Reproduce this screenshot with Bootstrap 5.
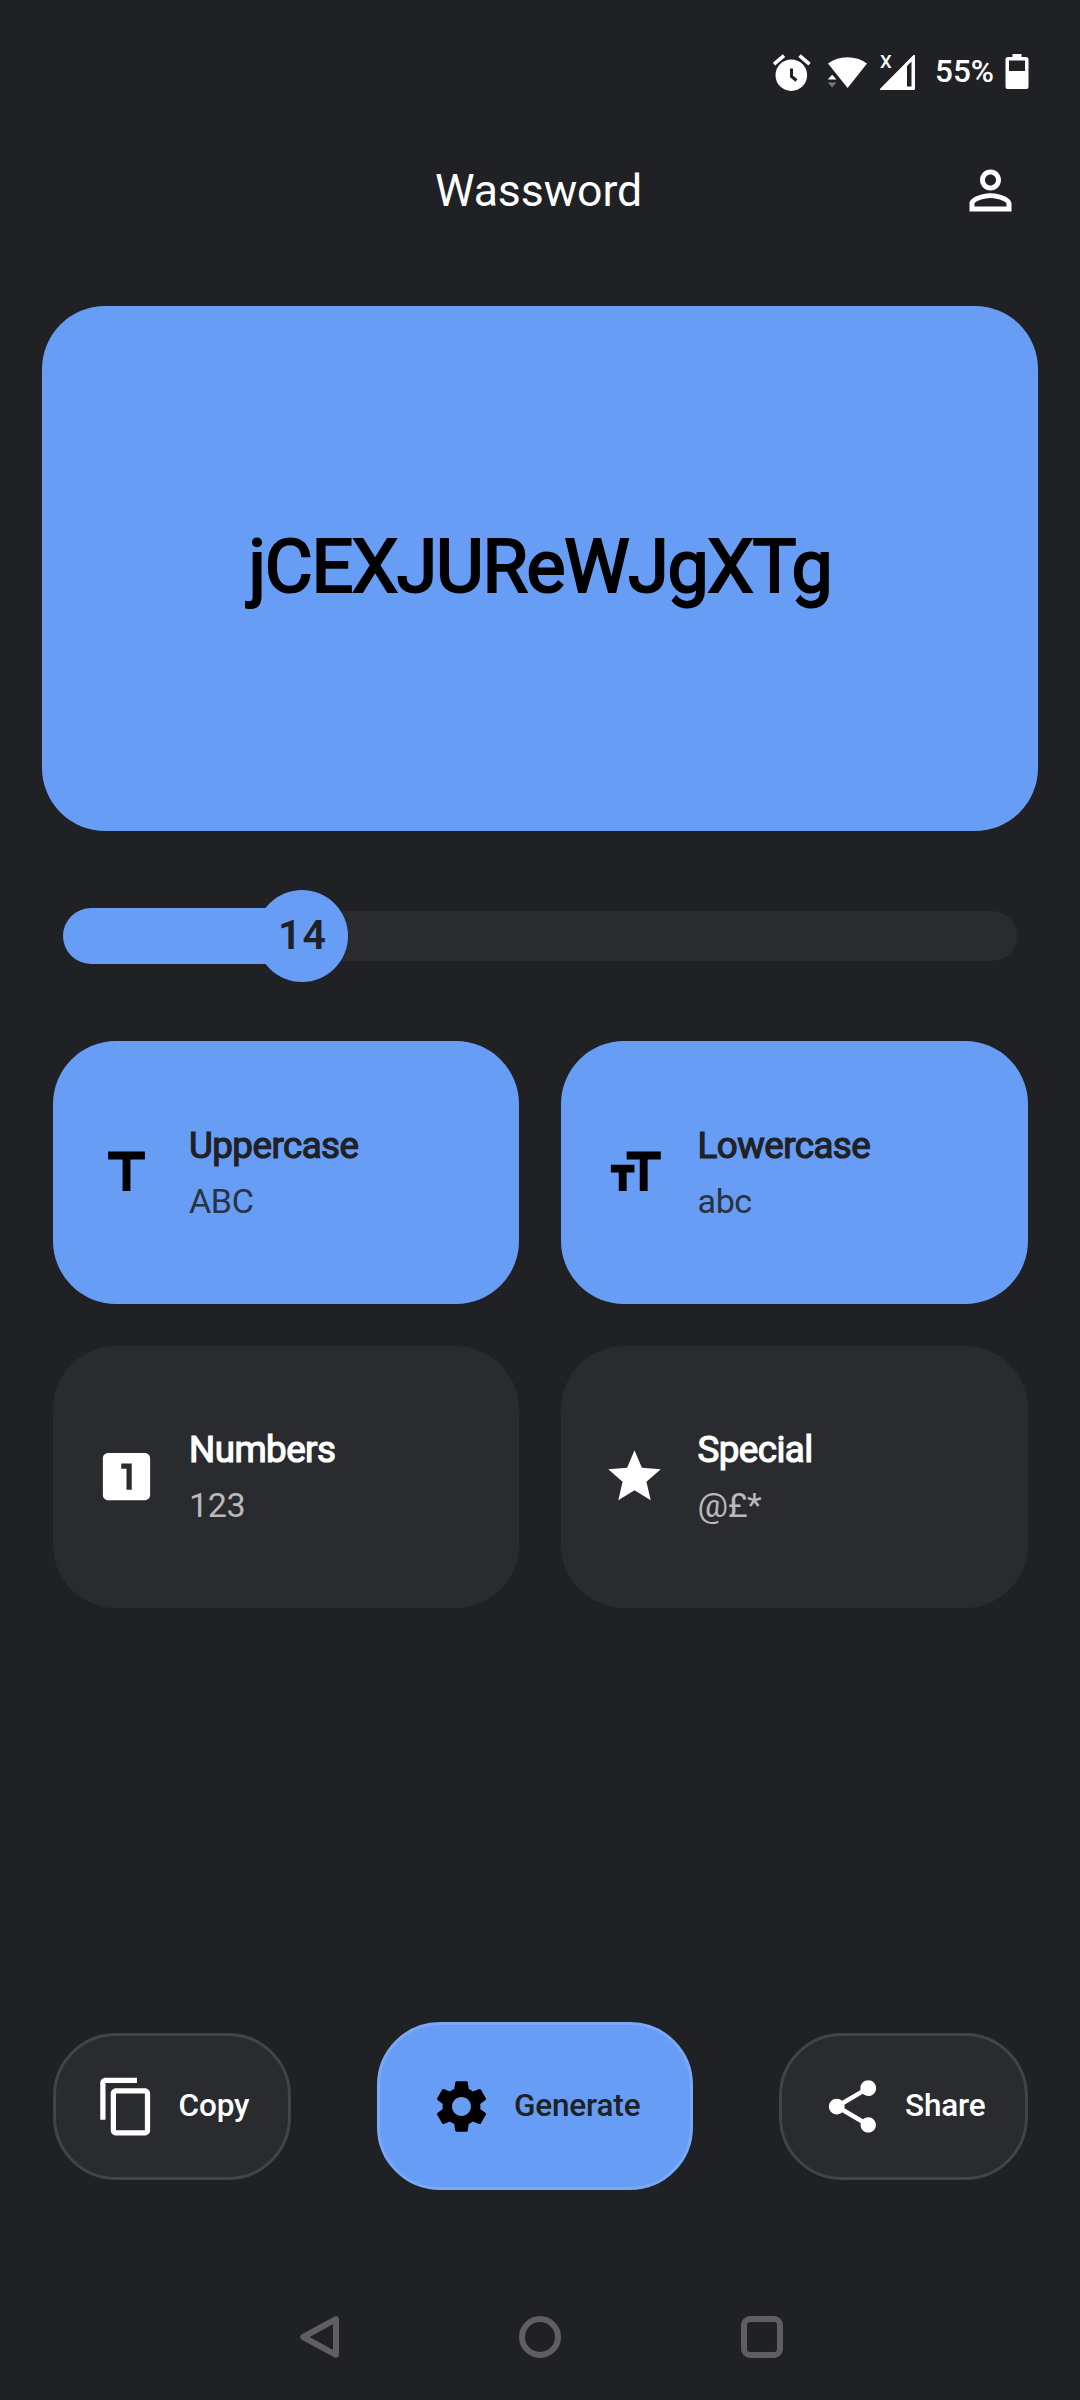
<!DOCTYPE html>
<html lang="en" data-bs-theme="dark">
<head>
<meta charset="utf-8">
<meta name="viewport" content="width=device-width, initial-scale=1">
<title>Wassword</title>
<link href="https://cdn.jsdelivr.net/npm/bootstrap@5.3.0/dist/css/bootstrap.min.css" rel="stylesheet">
<style>
  :root { --app-bg:#202124; --surface:#2a2b2f; --accent:#679df5; --outline:#434447; }
  body { background:var(--app-bg); font-family:Roboto,"Noto Sans",sans-serif; color:#fff; }
  .screen { width:1080px; height:2400px; }
  .statusbar { height:144px; padding-right:51px; }
  .statusbar svg { overflow:visible; }
  .battery-label { font-size:31.5px; font-weight:500; line-height:36px; margin:-1px 11px 0 19.5px; }
  .topbar { height:92px; padding-right:58.5px; }
  .app-title { font-size:44.6px; line-height:52px; font-weight:400; letter-spacing:-.1px; padding:2px 3px 0 0; }
  .ico { width:63px; height:63px; fill:currentColor; flex:none; display:block; }
  .password-card { height:525px; margin:70px 42px 0; border-radius:63px; background:var(--accent); color:#000; }
  .password-text { font-size:73.5px; line-height:86px; letter-spacing:-1.25px; padding-bottom:3px; -webkit-text-stroke:2.2px #000; }
  .length-slider { height:210px; padding:0 63px; }
  .slider-track { height:50px; border-radius:25px; background:var(--surface); }
  .slider-fill { height:56px; border-radius:28px 0 0 28px; background:var(--accent); }
  .slider-knob { width:92px; height:92px; background:var(--accent); color:var(--app-bg); font-size:41px; font-weight:600; letter-spacing:1px; padding-left:2px; }
  .options { padding:0 52.5px; display:grid; grid-template-columns:1fr 1fr; gap:42px; }
  .option { height:262.5px; border-radius:63px; padding-left:42px; gap:31.5px; background:var(--surface); color:#fff; }
  .option.on { background:var(--accent); color:#000; }
  .option-name { font-size:36.75px; line-height:54px; letter-spacing:-.55px; color:#fff; -webkit-text-stroke:1.2px currentColor; padding-top:3px; }
  .option-hint { font-size:34.1px; line-height:56px; letter-spacing:-.4px; color:#b9b9bb; }
  .on .option-name { color:#202124; }
  .on .option-hint { color:#2a3340; }
  .actions { height:168px; margin:auto 52.5px 210px; }
  .action { height:147px; border-radius:63px; border:3px solid var(--outline); background:var(--surface); color:#fff; font-size:31.5px; font-weight:500; letter-spacing:-.15px; padding:0 39px; gap:21px; }
  .action.main { height:168px; border-color:#7aa9f5; background:var(--accent); color:#202124; padding:0 50px; }
  .action.main .ico { color:#000; }
  .navkeys { height:126px; margin-top:-126px; padding:0 294px; }
  .navkeys svg { width:48px; height:48px; fill:none; stroke:#5f5f61; stroke-width:6; stroke-linejoin:round; }
</style>
</head>
<body>
<div class="screen d-flex flex-column overflow-hidden">
  <div class="statusbar d-flex align-items-center justify-content-end">
    <svg width="144" height="40" viewBox="772 52 144 40" fill="#fff">
      <circle cx="792.3" cy="75.2" r="15.8"/>
      <path d="M775 64.200l10-8.600M800.500 55.600l10 8.600" stroke="#fff" stroke-width="3.600"/>
      <path d="M792.500 68.500v8l5 4" fill="none" stroke="#202124" stroke-width="3"/>
      <path d="M829 63.600a33 33 0 0 1 39 0L848.600 88z"/>
      <path d="M828.800 79.500h8.600l-4.300-4.800z"/>
      <path d="M828.800 82.600h8.600l-4.300 4.800z" fill="#77787a"/>
      <path fill-rule="evenodd" d="M916 56v32.500q0 1.500-1.500 1.500H882q-2 0-.6-1.500L914 55.500q2-1.500 2 .5zM912.500 61.500L908 66V86.500h4.500z"/>
      <text x="881" y="68" font-family="Roboto" font-size="18.500" font-weight="500">X</text>
    </svg>
    <span class="battery-label">55%</span>
    <svg width="24" height="36" viewBox="0 0 24 36"><path fill="#fff" fill-rule="evenodd" d="M7.500 0h9v3H21q2.500 0 2.500 2.500V33q0 2-2 2h-19Q.5 35 .5 33V5.500Q.5 3 3 3h4.500zM4 6.500V17h16V6.500z"/></svg>
  </div>
  <header class="topbar d-flex align-items-center position-relative justify-content-end">
    <h1 class="app-title m-0 position-absolute start-50 translate-middle-x">Wassword</h1>
    <svg class="ico" viewBox="0 0 24 24"><path d="M12 5.900c1.160 0 2.100.940 2.100 2.100s-.940 2.100-2.100 2.100S9.900 9.160 9.900 8s.940-2.100 2.100-2.100m0 9c2.970 0 6.100 1.460 6.100 2.100v1.100H5.900V17c0-.640 3.130-2.100 6.100-2.100M12 4C9.790 4 8 5.790 8 8s1.790 4 4 4 4-1.790 4-4-1.790-4-4-4zm0 9c-2.670 0-8 1.340-8 4v3h16v-3c0-2.660-5.330-4-8-4z"/></svg>
  </header>
  <section class="password-card d-flex align-items-center justify-content-center">
    <span class="password-text">jCEXJUReWJgXTg</span>
  </section>
  <section class="length-slider d-flex align-items-center">
    <div class="slider-track d-flex align-items-center w-100">
      <div class="slider-fill position-relative" style="width:25%">
        <span class="slider-knob rounded-circle position-absolute top-50 start-100 translate-middle d-flex align-items-center justify-content-center">14</span>
      </div>
    </div>
  </section>
  <section class="options">
    <div class="option on d-flex align-items-center">
      <svg class="ico" viewBox="0 0 24 24"><path d="M5 4v3h5.500v12h3V7H19V4z"/></svg>
      <div><div class="option-name">Uppercase</div><div class="option-hint">ABC</div></div>
    </div>
    <div class="option on d-flex align-items-center">
      <svg class="ico" viewBox="0 0 24 24"><path d="M9 4v3h5v12h3V7h5V4H9zm-6 8h3v7h3v-7h3V9H3v3z"/></svg>
      <div><div class="option-name">Lowercase</div><div class="option-hint">abc</div></div>
    </div>
    <div class="option d-flex align-items-center">
      <svg class="ico" viewBox="0 0 24 24"><path d="M19 3H5c-1.100 0-2 .9-2 2v14c0 1.100.9 2 2 2h14c1.100 0 2-.9 2-2V5c0-1.100-.9-2-2-2zm-5 14h-2V9h-2V7h4v10z"/></svg>
      <div><div class="option-name">Numbers</div><div class="option-hint">123</div></div>
    </div>
    <div class="option d-flex align-items-center">
      <svg class="ico" viewBox="0 0 24 24"><path d="M12 17.270L18.180 21l-1.640-7.030L22 9.240l-7.190-.61L12 2 9.190 8.630 2 9.240l5.460 4.730L5.820 21z"/></svg>
      <div><div class="option-name">Special</div><div class="option-hint">@£*</div></div>
    </div>
  </section>
  <footer class="actions d-flex align-items-center justify-content-between">
    <button class="action d-flex align-items-center"><svg class="ico" viewBox="0 0 24 24"><path d="M16 1H4c-1.100 0-2 .9-2 2v14h2V3h12V1zm3 4H8c-1.100 0-2 .9-2 2v14c0 1.100.9 2 2 2h11c1.100 0 2-.9 2-2V7c0-1.100-.9-2-2-2zm0 16H8V7h11v14z"/></svg><span>Copy</span></button>
    <button class="action main d-flex align-items-center"><svg class="ico" viewBox="0 0 24 24"><path d="M19.140 12.940c.04-.3.06-.61.06-.94 0-.32-.02-.64-.07-.94l2.030-1.580c.18-.14.23-.41.12-.61l-1.920-3.320c-.12-.22-.37-.29-.59-.22l-2.390.96c-.5-.38-1.030-.7-1.620-.94l-.36-2.540c-.04-.24-.24-.41-.48-.41h-3.840c-.24 0-.43.17-.47.41l-.36 2.540c-.59.24-1.130.57-1.620.94l-2.390-.96c-.22-.08-.47 0-.59.22L2.740 8.870c-.12.21-.08.47.12.61l2.030 1.580c-.05.3-.09.63-.09.94s.02.64.07.94l-2.030 1.580c-.18.14-.23.41-.12.61l1.920 3.320c.12.22.37.29.59.22l2.390-.96c.5.38 1.030.7 1.620.94l.36 2.540c.05.24.24.41.48.41h3.840c.24 0 .44-.17.47-.41l.36-2.540c.59-.24 1.130-.56 1.620-.94l2.390.96c.22.08.47 0 .59-.22l1.920-3.320c.12-.22.07-.47-.12-.61l-2.010-1.580zM12 15.600c-1.980 0-3.600-1.620-3.600-3.600s1.620-3.600 3.600-3.600 3.600 1.620 3.600 3.600-1.620 3.600-3.600 3.600z"/></svg><span>Generate</span></button>
    <button class="action d-flex align-items-center"><svg class="ico" viewBox="0 0 24 24"><path d="M18 16.080c-.76 0-1.440.3-1.960.77L8.910 12.700c.05-.23.09-.46.09-.7s-.04-.47-.09-.7l7.050-4.110c.54.5 1.250.81 2.040.81 1.660 0 3-1.340 3-3s-1.340-3-3-3-3 1.340-3 3c0 .24.04.47.09.7L8.040 9.810C7.500 9.310 6.790 9 6 9c-1.660 0-3 1.340-3 3s1.340 3 3 3c.79 0 1.500-.31 2.040-.81l7.120 4.160c-.05.21-.08.43-.08.65 0 1.610 1.310 2.920 2.920 2.920s2.920-1.310 2.920-2.920-1.310-2.920-2.920-2.920z"/></svg><span>Share</span></button>
  </footer>
  <nav class="navkeys d-flex align-items-center justify-content-between">
    <svg viewBox="0 0 48 48"><path d="M42 6.200v35.600L9.200 24z"/></svg>
    <svg viewBox="0 0 48 48"><circle cx="24" cy="24" r="18"/></svg>
    <svg viewBox="0 0 48 48"><rect x="6" y="6" width="36" height="36" rx="6"/></svg>
  </nav>
</div>
<script src="https://cdn.jsdelivr.net/npm/bootstrap@5.3.0/dist/js/bootstrap.bundle.min.js"></script>
</body>
</html>
